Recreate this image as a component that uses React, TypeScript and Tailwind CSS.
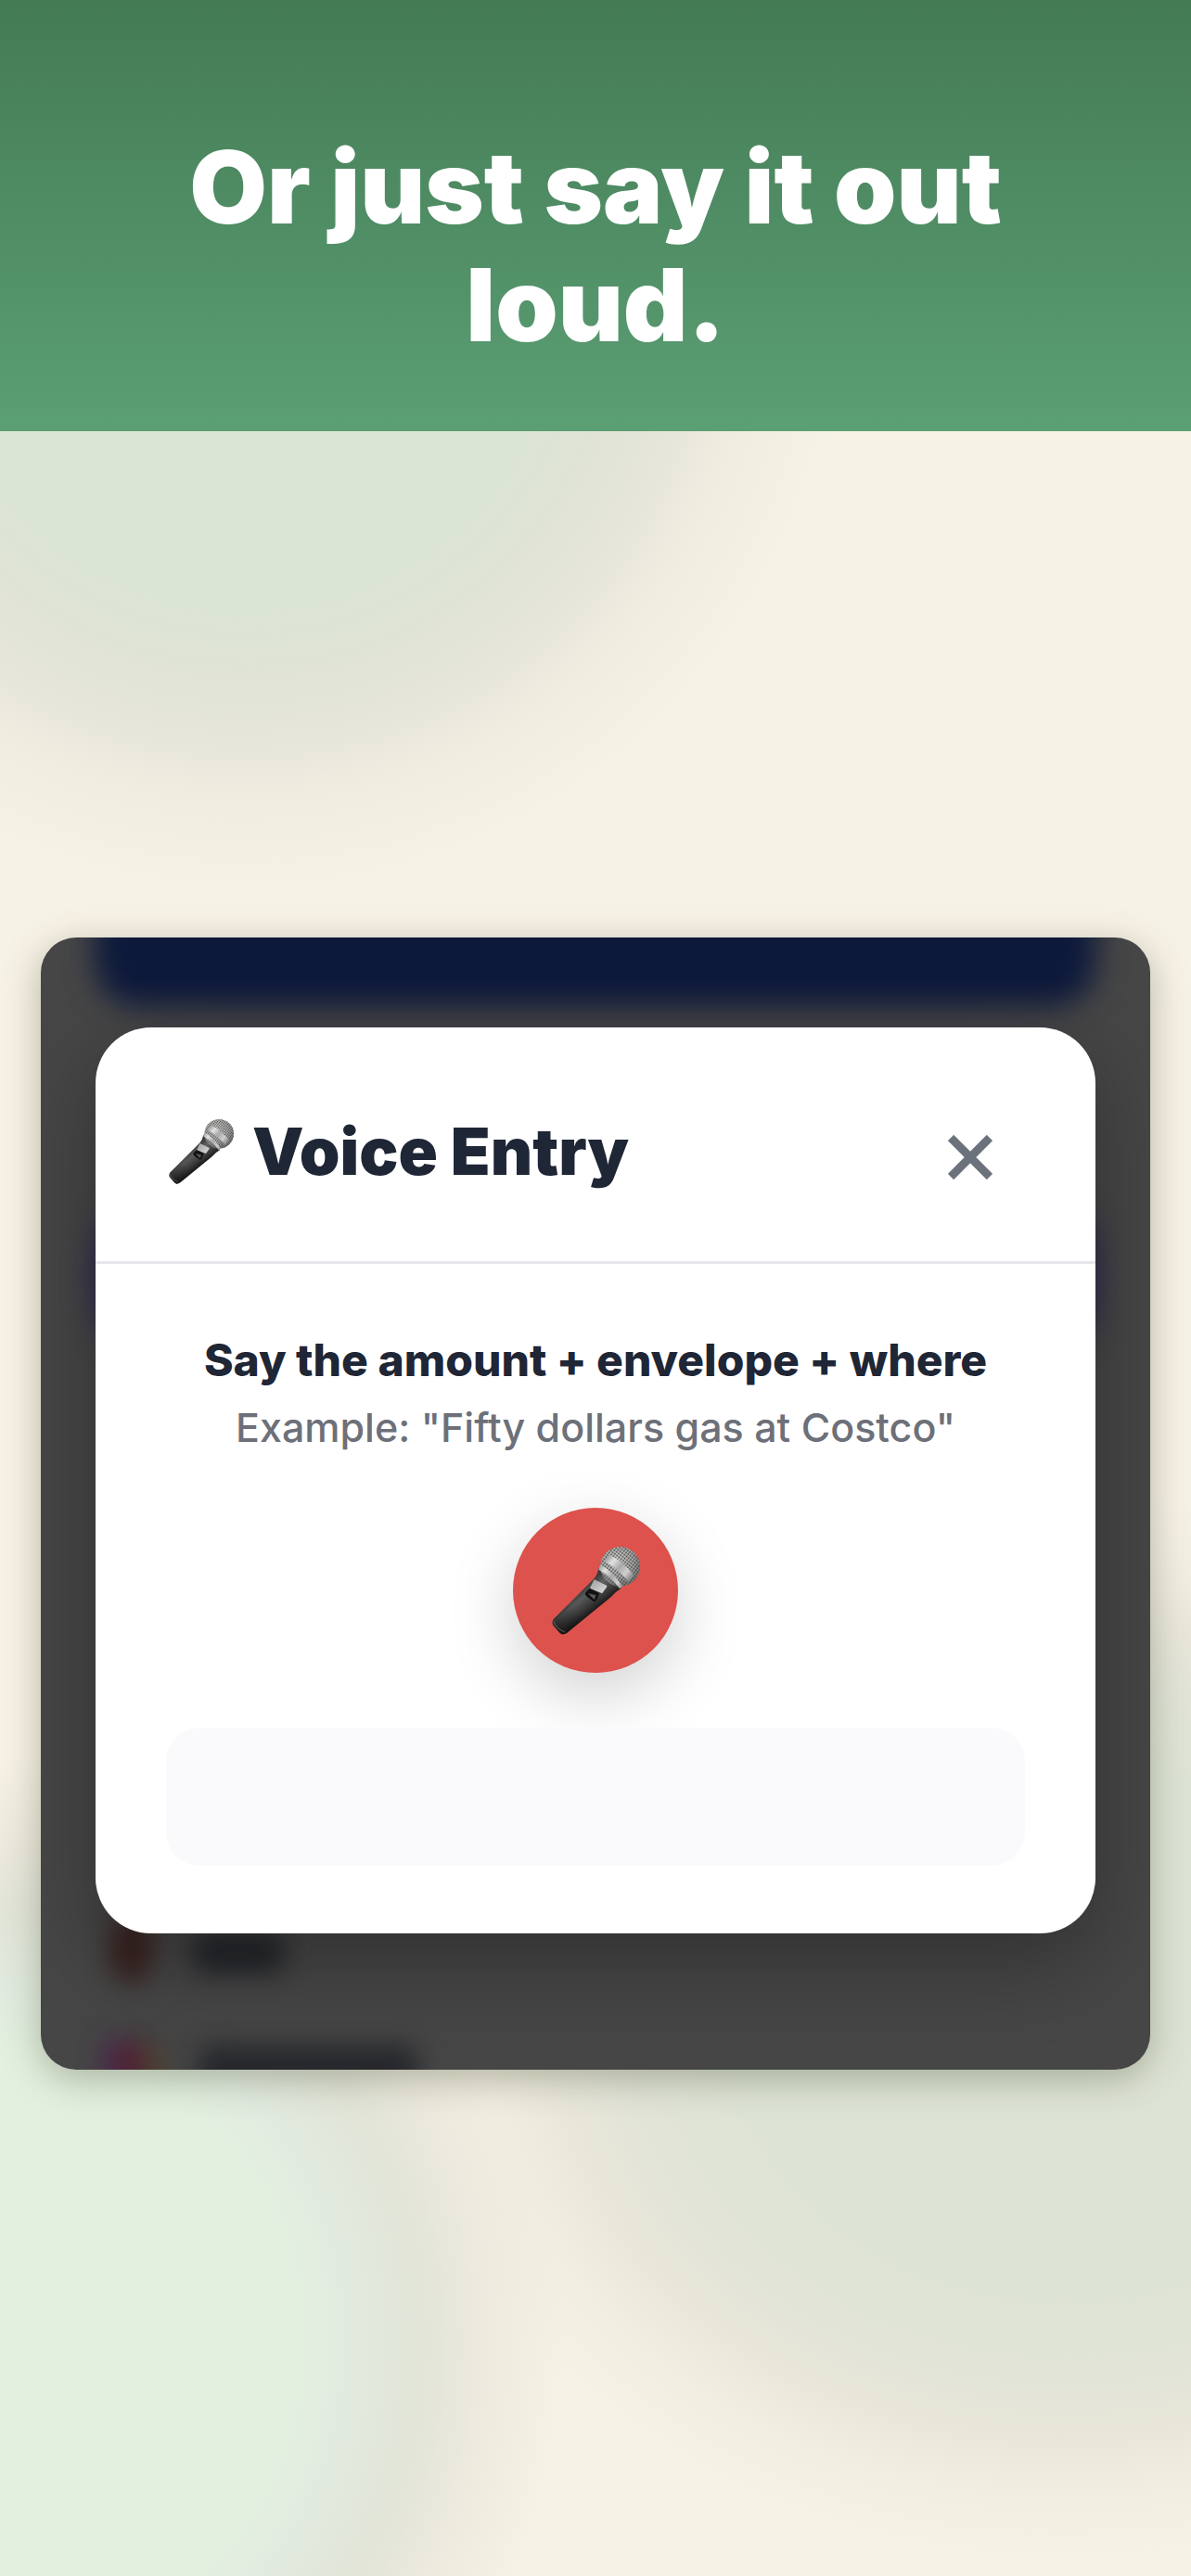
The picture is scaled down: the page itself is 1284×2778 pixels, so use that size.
import React from 'react';

interface MicrophoneProps {
  id: string;
  className?: string;
}

const Microphone: React.FC<MicrophoneProps> = ({ id, className }) => (
  <svg viewBox="0 0 100 100" className={className} aria-hidden="true">
    <defs>
      <linearGradient id={`${id}-body`} gradientUnits="userSpaceOnUse" x1="26" y1="54" x2="44" y2="76">
        <stop offset="0" stopColor="#3c3c3c" />
        <stop offset="0.3" stopColor="#616262" />
        <stop offset="0.65" stopColor="#434343" />
        <stop offset="1" stopColor="#1c1c1c" />
      </linearGradient>
      <linearGradient id={`${id}-shade`} gradientUnits="userSpaceOnUse" x1="60" y1="40" x2="8" y2="94">
        <stop offset="0" stopColor="#000" stopOpacity="0" />
        <stop offset="0.6" stopColor="#000" stopOpacity="0.12" />
        <stop offset="1" stopColor="#000" stopOpacity="0.5" />
      </linearGradient>
      <linearGradient id={`${id}-band`} gradientUnits="userSpaceOnUse" x1="60" y1="12" x2="90" y2="38">
        <stop offset="0" stopColor="#8d8d8d" />
        <stop offset="0.25" stopColor="#e2e2e2" />
        <stop offset="0.5" stopColor="#a9abab" />
        <stop offset="0.75" stopColor="#cfcfcf" />
        <stop offset="1" stopColor="#7a7a7a" />
      </linearGradient>
      <radialGradient id={`${id}-head`} cx="0.4" cy="0.35" r="0.7">
        <stop offset="0" stopColor="#d6d6d4" />
        <stop offset="0.6" stopColor="#b0b0ae" />
        <stop offset="1" stopColor="#747473" />
      </radialGradient>
      <linearGradient id={`${id}-switch`} x1="0" y1="0" x2="1" y2="1">
        <stop offset="0" stopColor="#9a9a9a" />
        <stop offset="1" stopColor="#e0e0e0" />
      </linearGradient>
      <pattern id={`${id}-mesh`} width="3" height="3" patternUnits="userSpaceOnUse" patternTransform="rotate(38)">
        <circle cx="1.5" cy="1.5" r="0.9" fill="#2f2f2f" />
      </pattern>
    </defs>
    {/* Handle */}
    <path d="M53 24 Q52 32 47 37 L2 82 Q-1 86 2 90 L9 98 Q12 101 17 98 L67 57 Q72 51 79 47 Z" fill={`url(#${id}-body)`} />
    <path d="M53 24 Q52 32 47 37 L2 82 Q-1 86 2 90 L9 98 Q12 101 17 98 L67 57 Q72 51 79 47 Z" fill={`url(#${id}-shade)`} />
    <path d="M2 85 Q5 93 15 97" fill="none" stroke="#777" strokeWidth="0.8" />
    {/* Grille */}
    <circle cx="77.5" cy="22.5" r="22.5" fill={`url(#${id}-head)`} />
    <circle cx="77.5" cy="22.5" r="22.5" fill={`url(#${id}-mesh)`} />
    <path d="M65 9 Q82 17 93 33 L87 40 Q76 25 59 16 Z" fill={`url(#${id}-band)`} />
    <path d="M55 20 Q69 28 80 45 L77 48 Q68 34 53 26 Z" fill={`url(#${id}-band)`} />
    {/* Switch */}
    <path d="M43 47 L38 52 Q37 54 39 56 L47 62 Q50 63 51 60 L54 53 Z" fill="#121212" />
    <path d="M48 37 L62 44 Q63 45 62 46 L57 53 L43 47 Z" fill={`url(#${id}-switch)`} />
    <path d="M41 53 L50 55 L48 60 Z" fill="#5a5a5a" />
  </svg>
);

// Page seen through the dimmed overlay
const BlurredPage: React.FC = () => (
  <div className="absolute inset-0" aria-hidden="true">
    <div className="absolute -top-20 inset-x-[58px] h-[154px] rounded-[48px] bg-[#0d193b] blur-lg" />
    <div className="absolute top-[290px] inset-x-[58px] h-[150px] rounded-[48px] bg-[#2a2350] blur-lg" />
    <div className="absolute bottom-[94px] left-[74px] h-[72px] w-[46px] rounded-full bg-[#331815] opacity-80 blur-[14px]" />
    <div className="absolute bottom-[104px] left-[164px] h-[44px] w-[98px] rounded-xl bg-[#1f2126] opacity-90 blur-[14px]" />
    <div className="absolute -bottom-6 left-[66px] h-[58px] w-[34px] rounded-full bg-[#4b1f50] opacity-70 blur-[14px]" />
    <div className="absolute -bottom-6 left-[82px] h-[54px] w-[34px] rounded-full bg-[#54202e] opacity-80 blur-[12px]" />
    <div className="absolute -bottom-6 left-[112px] h-[54px] w-[20px] rounded-full bg-[#4f3f24] opacity-60 blur-[12px]" />
    <div className="absolute -bottom-6 left-[170px] h-[50px] w-[236px] rounded-xl bg-[#212328] opacity-90 blur-[14px]" />
  </div>
);

const VoiceEntryDialog: React.FC = () => (
  <div
    role="dialog"
    aria-labelledby="voice-title"
    className="relative rounded-[60px] bg-white shadow-[0_30px_90px_rgba(0,0,0,0.3)]"
  >
    <div className="flex items-end justify-between border-b-[3px] border-[#e5e7eb] pt-[94px] pr-[101px] pb-[78px] pl-[79px]">
      <h2 id="voice-title" className="flex items-center gap-5 text-[70px] leading-[80px] font-black text-[#1f2635]">
        <Microphone id="title-mic" className="size-[70px]" />
        Voice Entry
      </h2>
      <button type="button" aria-label="Close" className="flex size-[68px] items-center justify-center text-[#6c727c]">
        <svg viewBox="0 0 48 48" className="size-12" fill="none" stroke="currentColor" strokeWidth="9">
          <path d="M3 3 L45 45 M45 3 L3 45" />
        </svg>
      </button>
    </div>

    <div className="flex flex-col items-center px-[76px] pt-[68px] pb-[73px] text-center">
      <p className="text-[48px] leading-[72px] font-extrabold text-[#1f2635]">Say the amount + envelope + where</p>
      <p className="text-[43px] leading-[72px] font-medium text-[#6d7079]">
        Example: "Fifty dollars gas at Costco"
      </p>
      <button
        type="button"
        aria-label="Start recording"
        className="mt-[51px] flex size-[178px] items-center justify-center rounded-full bg-[#dd524c] shadow-[0_24px_72px_rgba(0,0,0,0.18)]"
      >
        <Microphone id="record-mic" className="size-[95px]" />
      </button>
      <div className="mt-[59px] h-[149px] w-full rounded-[36px] bg-[#fafafc]" aria-live="polite" />
    </div>
  </div>
);

export default function App() {
  return (
    <div className="flex min-h-screen flex-col bg-[#f7f2e6] font-['Inter',sans-serif]">
      <header className="bg-linear-to-b from-[#447b54] to-[#5b9f75] px-[90px] pt-[138px] pb-[73px]">
        <h1 className="text-center text-[108px] leading-[127px] font-black text-white">
          Or just say it out loud.
        </h1>
      </header>

      <main className="relative flex flex-1 flex-col justify-center overflow-hidden px-11">
        {/* Soft background shapes */}
        <div className="absolute inset-0 bg-[radial-gradient(circle_at_265px_-145px,#dbe5d5_330px,#dfe3d6_400px,#e7e6da_480px,#f1ede1_550px,#f7f2e600_650px)]" />
        <div className="absolute inset-0 bg-[radial-gradient(720px_580px_at_1150px_1725px,#dee4d5_50%,#e1e4d7_64%,#e9e7da_76%,#f2eee2_87%,#f7f2e600_100%)]" />
        <div className="absolute inset-0 bg-[radial-gradient(600px_630px_at_10px_2060px,#e3f0df_50%,#e2ebe0_60%,#e2e5d8_74%,#e9e7dbcc_84%,#f0ecdf00_100%)]" />

        <section className="relative overflow-hidden rounded-[38px] bg-[#464646] px-[59px] pt-[97px] pb-[147px] shadow-[0_10px_40px_rgba(60,70,40,0.35)]">
          <BlurredPage />
          <VoiceEntryDialog />
        </section>
      </main>
    </div>
  );
}
